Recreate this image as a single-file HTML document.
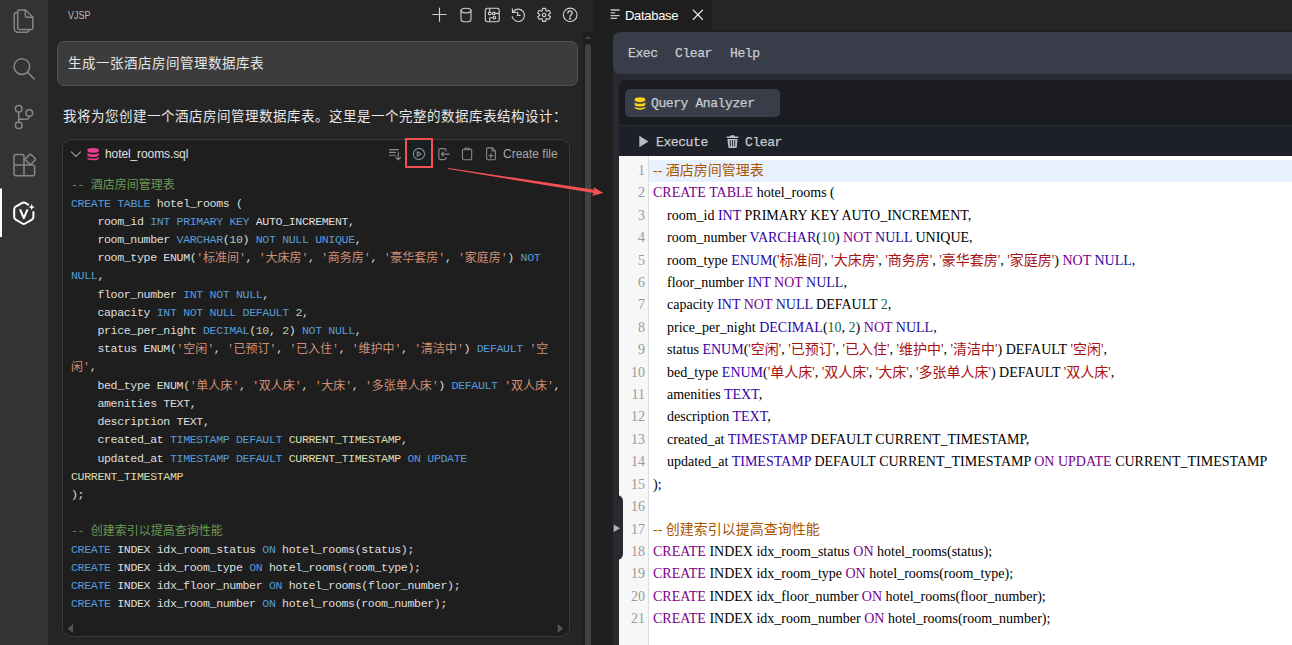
<!DOCTYPE html>
<html lang="zh">
<head>
<meta charset="utf-8">
<title>VJSP Database</title>
<style>
*{box-sizing:border-box;margin:0;padding:0}
html,body{width:1292px;height:645px;overflow:hidden;background:#1e1e1e}
body{position:relative;font-family:"Liberation Sans","Noto Sans CJK SC",sans-serif;color:#ccc}
.abs{position:absolute}
#act{left:0;top:0;width:48px;height:645px;background:#333333}
#side{left:48px;top:0;width:545px;height:645px;background:#252526}
#tabbar{left:712px;top:0;width:580px;height:31px;background:#252526}
#sbtrack{left:583px;top:32px;width:10px;height:613px;background:#1e1e1e}
#sbthumb{left:585px;top:44px;width:6px;height:601px;background:#424242;border-radius:3px 3px 0 0}
.ic{position:absolute;fill:none;stroke:#858585;stroke-width:1.6}
#title{left:68px;top:8px;font-size:11px;line-height:14px;color:#bbbbbb}
#umsg{left:57px;top:41px;width:521px;height:45px;background:#3c3c3c;border:1px solid #525252;border-radius:7px;font-size:13.5px;letter-spacing:0.5px;line-height:19px;color:#e6e6e6;padding:12px 0 0 10px;white-space:nowrap}
#amsg{left:63px;top:107px;font-size:13.5px;letter-spacing:0.5px;line-height:20px;color:#e6e6e6;white-space:nowrap}
#cb{left:62px;top:139px;width:508px;height:498px;background:#1e1e1e;border:1px solid #3a3a3a;border-radius:9px}
#fname{left:105px;top:146px;font-size:12px;letter-spacing:-0.1px;line-height:16px;color:#e0e0e0;white-space:nowrap}
#cfile{left:503px;top:146px;font-size:12px;line-height:16px;color:#a8a8a8;white-space:nowrap}
#code{left:71px;top:176.3px;font-family:"Liberation Mono","Noto Sans CJK SC",monospace;font-size:11.6px;letter-spacing:-0.361px;line-height:18.22px;color:#dedede;white-space:pre}
#code .z{font-size:12px;letter-spacing:0;position:relative;top:1px}
#code .k{color:#569cd6}#code .s{color:#ce9178}#code .n{color:#b5cea8}#code .c{color:#6a9955}#code .f{color:#dcdcaa}
#redbox{left:405px;top:138px;width:28px;height:30px;border:2px solid #f25054;background:#181f20}
/* right */
#tab{left:593px;top:0;width:119px;height:31px;background:#1e1e1e}
#tabname{left:625px;top:8px;font-size:13px;letter-spacing:-0.3px;line-height:16px;color:#ffffff}
#menubar{left:613px;top:32px;width:700px;height:42px;background:#393d4a;border-radius:7px 0 0 7px}
.mono{-webkit-text-stroke:0.25px #c9cbd1;font-family:"Liberation Mono",monospace;font-size:13px;letter-spacing:-0.4px;line-height:16px;color:#c9cbd1;white-space:pre}
#band{left:613px;top:60px;width:700px;height:585px;background:#292a30}
#panel{left:619px;top:80px;width:700px;height:565px;background:#1b1c21;border-radius:7px 0 0 0}
#qtab{left:625px;top:89px;width:155px;height:28px;background:#393d4a;border-radius:5px}
#sep{left:619px;top:125px;width:700px;height:31px;background:#1e2028;border-top:1px solid #2b2d34}
#ed{left:619px;top:156px;width:673px;height:489px;background:#fff}
#gut{left:619px;top:156px;width:30px;height:489px;background:#f7f7f7;border-right:1px solid #ddd}
#actl{left:649px;top:160px;width:643px;height:22px;background:#e8f2ff}
#ln{left:619px;top:160px;width:26px;text-align:right;font-family:"Liberation Serif",serif;font-size:14px;line-height:22.4px;color:#999;white-space:pre}
#sql{left:653px;top:160px;font-family:"Liberation Serif","Noto Sans CJK SC",serif;font-size:14px;line-height:22.4px;color:#000;white-space:pre}
#sql .k{color:#708}#sql .b{color:#30a}#sql .a{color:#219}#sql .n{color:#164}#sql .s{color:#a11}#sql .c{color:#a50}
#handle{left:613px;top:495px;width:10px;height:65px;background:#292a30;border-radius:0 6px 6px 0}
</style>
</head>
<body>
<div id="act" class="abs"></div>
<div id="side" class="abs"></div>
<div id="sbtrack" class="abs"></div>
<div id="sbthumb" class="abs"></div>
<div id="title" class="abs"><span style="display:inline-block;transform-origin:0 50%;transform:scaleX(.82)">VJSP</span></div>
<div id="umsg" class="abs">生成一张酒店房间管理数据库表</div>
<div id="amsg" class="abs">我将为您创建一个酒店房间管理数据库表。这里是一个完整的数据库表结构设计：</div>
<div id="cb" class="abs"></div>
<div id="fname" class="abs">hotel_rooms.sql</div>
<div id="cfile" class="abs">Create file</div>
<div id="code" class="abs"><span class="c">-- <span class="z">酒店房间管理表</span></span>
<span class="k">CREATE</span> <span class="k">TABLE</span> hotel_rooms (
    room_id <span class="k">INT</span> <span class="k">PRIMARY</span> <span class="k">KEY</span> AUTO_INCREMENT,
    room_number <span class="k">VARCHAR</span>(<span class="n">10</span>) <span class="k">NOT</span> <span class="k">NULL</span> <span class="k">UNIQUE</span>,
    room_type ENUM(<span class="s">'<span class="z">标准间</span>'</span>, <span class="s">'<span class="z">大床房</span>'</span>, <span class="s">'<span class="z">商务房</span>'</span>, <span class="s">'<span class="z">豪华套房</span>'</span>, <span class="s">'<span class="z">家庭房</span>'</span>) <span class="k">NOT</span>
<span class="k">NULL</span>,
    floor_number <span class="k">INT</span> <span class="k">NOT</span> <span class="k">NULL</span>,
    capacity <span class="k">INT</span> <span class="k">NOT</span> <span class="k">NULL</span> <span class="k">DEFAULT</span> <span class="n">2</span>,
    price_per_night <span class="k">DECIMAL</span>(<span class="n">10</span>, <span class="n">2</span>) <span class="k">NOT</span> <span class="k">NULL</span>,
    status ENUM(<span class="s">'<span class="z">空闲</span>'</span>, <span class="s">'<span class="z">已预订</span>'</span>, <span class="s">'<span class="z">已入住</span>'</span>, <span class="s">'<span class="z">维护中</span>'</span>, <span class="s">'<span class="z">清洁中</span>'</span>) <span class="k">DEFAULT</span> <span class="s">'<span class="z">空</span></span>
<span class="s"><span class="z">闲</span>'</span>,
    bed_type ENUM(<span class="s">'<span class="z">单人床</span>'</span>, <span class="s">'<span class="z">双人床</span>'</span>, <span class="s">'<span class="z">大床</span>'</span>, <span class="s">'<span class="z">多张单人床</span>'</span>) <span class="k">DEFAULT</span> <span class="s">'<span class="z">双人床</span>'</span>,
    amenities TEXT,
    description TEXT,
    created_at <span class="k">TIMESTAMP</span> <span class="k">DEFAULT</span> <span class="f">CURRENT_TIMESTAMP</span>,
    updated_at <span class="k">TIMESTAMP</span> <span class="k">DEFAULT</span> <span class="f">CURRENT_TIMESTAMP</span> <span class="k">ON</span> <span class="k">UPDATE</span>
<span class="f">CURRENT_TIMESTAMP</span>
);

<span class="c">-- <span class="z">创建索引以提高查询性能</span></span>
<span class="k">CREATE</span> INDEX idx_room_status <span class="k">ON</span> hotel_rooms(status);
<span class="k">CREATE</span> INDEX idx_room_type <span class="k">ON</span> hotel_rooms(room_type);
<span class="k">CREATE</span> INDEX idx_floor_number <span class="k">ON</span> hotel_rooms(floor_number);
<span class="k">CREATE</span> INDEX idx_room_number <span class="k">ON</span> hotel_rooms(room_number);</div>
<div id="redbox" class="abs"></div>

<div id="tab" class="abs"></div>
<div id="tabbar" class="abs"></div>
<div id="tabname" class="abs">Database</div>
<div id="band" class="abs"></div>
<div id="menubar" class="abs"></div>
<div class="abs mono" style="left:628px;top:46px">Exec</div>
<div class="abs mono" style="left:675px;top:46px">Clear</div>
<div class="abs mono" style="left:730px;top:46px">Help</div>
<div id="panel" class="abs"></div>
<div id="qtab" class="abs"></div>
<div class="abs mono" style="left:651px;top:96px">Query Analyzer</div>
<div id="sep" class="abs"></div>
<div class="abs mono" style="left:656px;top:135px">Execute</div>
<div class="abs mono" style="left:745px;top:135px">Clear</div>
<div id="ed" class="abs"></div>
<div id="gut" class="abs"></div>
<div id="actl" class="abs"></div>
<div id="ln" class="abs">1
2
3
4
5
6
7
8
9
10
11
12
13
14
15
16
17
18
19
20
21</div>
<div id="sql" class="abs"><span class="c">-- 酒店房间管理表</span>
<span class="k">CREATE</span> <span class="k">TABLE</span> hotel_rooms (
    room_id <span class="b">INT</span> PRIMARY KEY AUTO_INCREMENT,
    room_number <span class="b">VARCHAR</span>(<span class="n">10</span>) <span class="k">NOT</span> <span class="a">NULL</span> UNIQUE,
    room_type <span class="b">ENUM</span>(<span class="s">'标准间'</span>, <span class="s">'大床房'</span>, <span class="s">'商务房'</span>, <span class="s">'豪华套房'</span>, <span class="s">'家庭房'</span>) <span class="k">NOT</span> <span class="a">NULL</span>,
    floor_number <span class="b">INT</span> <span class="k">NOT</span> <span class="a">NULL</span>,
    capacity <span class="b">INT</span> <span class="k">NOT</span> <span class="a">NULL</span> DEFAULT <span class="n">2</span>,
    price_per_night <span class="b">DECIMAL</span>(<span class="n">10</span>, <span class="n">2</span>) <span class="k">NOT</span> <span class="a">NULL</span>,
    status <span class="b">ENUM</span>(<span class="s">'空闲'</span>, <span class="s">'已预订'</span>, <span class="s">'已入住'</span>, <span class="s">'维护中'</span>, <span class="s">'清洁中'</span>) DEFAULT <span class="s">'空闲'</span>,
    bed_type <span class="b">ENUM</span>(<span class="s">'单人床'</span>, <span class="s">'双人床'</span>, <span class="s">'大床'</span>, <span class="s">'多张单人床'</span>) DEFAULT <span class="s">'双人床'</span>,
    amenities <span class="b">TEXT</span>,
    description <span class="b">TEXT</span>,
    created_at <span class="b">TIMESTAMP</span> DEFAULT CURRENT_TIMESTAMP,
    updated_at <span class="b">TIMESTAMP</span> DEFAULT CURRENT_TIMESTAMP <span class="k">ON</span> <span class="k">UPDATE</span> CURRENT_TIMESTAMP
);

<span class="c">-- 创建索引以提高查询性能</span>
<span class="k">CREATE</span> INDEX idx_room_status <span class="k">ON</span> hotel_rooms(status);
<span class="k">CREATE</span> INDEX idx_room_type <span class="k">ON</span> hotel_rooms(room_type);
<span class="k">CREATE</span> INDEX idx_floor_number <span class="k">ON</span> hotel_rooms(floor_number);
<span class="k">CREATE</span> INDEX idx_room_number <span class="k">ON</span> hotel_rooms(room_number);</div>
<div id="handle" class="abs"></div>
<svg class="abs" style="left:0;top:0" width="1292" height="645" viewBox="0 0 1292 645" fill="none" stroke-linecap="round" stroke-linejoin="round">
<!-- activity bar -->
<g stroke="#868686" stroke-width="1.5">
<path d="M19.3 10h6.2l7.3 7.3v10.7a1.6 1.6 0 0 1-1.6 1.6h-11.9a1.6 1.6 0 0 1-1.6-1.6v-16.4a1.6 1.6 0 0 1 1.6-1.6z"/>
<path d="M25.3 10.2v5.4a1.6 1.6 0 0 0 1.6 1.6h5.6"/>
<path d="M16.6 12.6a2.6 2.6 0 0 0-2.4 2.6v13.3a3.8 3.8 0 0 0 3.8 3.8h8.4a2.6 2.6 0 0 0 2.5-2.2"/>
<circle cx="21.9" cy="66.6" r="7.8"/><path d="M27.6 72.4l6.6 6.6"/>
<circle cx="18.7" cy="108.7" r="3.3"/><circle cx="18.7" cy="125.3" r="3.3"/><circle cx="29.3" cy="113" r="3.3"/>
<path d="M18.7 112v10M29.3 116.3a3 3 0 0 1-3 3h-7.6"/>
<path d="M24 165v-8.6a2 2 0 0 0-2-2h-6a2 2 0 0 0-2 2v17.4a2 2 0 0 0 2 2h16.6a2 2 0 0 0 2-2v-6.8a2 2 0 0 0-2-2h-18.6M24 165v10.8"/>
<rect x="-3.9" y="-3.9" width="7.8" height="7.8" rx="1.3" transform="translate(30.4 159.3) rotate(45)"/>
</g>
<rect x="0" y="188.5" width="2" height="48.5" fill="#ffffff"/>
<g stroke="#ffffff" stroke-width="2">
<path d="M28.2 204.6l-2.9-1.7a3 3 0 0 0-3 0l-6.6 3.8a3 3 0 0 0-1.5 2.6v7.8a3 3 0 0 0 1.5 2.6l6.6 3.8a3 3 0 0 0 3 0l6.6-3.8a3 3 0 0 0 1.5-2.6v-5.2"/>
<path d="M20.4 210.2l3.4 8 3.4-8" stroke-width="2.1"/>
</g>
<path d="M31.7 203.4c.3 2.4 1 3.2 3.5 3.6c-2.500 .4-3.200 1.200-3.500 3.600c-.3-2.400-1-3.200-3.500-3.600c2.500-.4 3.200-1.200 3.500-3.600z" fill="#ffffff"/>
<!-- sidebar toolbar -->
<g stroke="#d0d0d0" stroke-width="1.1">
<path d="M432.800 14.500h13.400M439.500 8v13.200"/>
<ellipse cx="466" cy="10.600" rx="5" ry="2.300"/><path d="M461 10.600v8.800c0 1.300 2.200 2.300 5 2.300s5-1 5-2.300v-8.800"/>
<rect x="485.300" y="8.300" width="13.900" height="13.400" rx="2.200"/>
<path d="M489.700 8.500v3.500M495 13.400h4M489.700 21.500v-3.800h3.300"/>
<circle cx="489.700" cy="13.400" r="1.300"/><circle cx="493.700" cy="13.400" r="1.300"/><circle cx="494.400" cy="17.600" r="1.300"/>
<path d="M513.600 11.200a6.200 6.200 0 1 1-1.400 5.400M512.400 8.800v3.600h3.600M517.600 12v3.400h2.600"/>
<circle cx="570.2" cy="14.9" r="6.8"/>
<path d="M567.900 13a2.100 2.100 0 1 1 3.300 1.700c-.8 .6-1.200 1-1.200 2" stroke-width="1.4"/><circle cx="570" cy="18.700" r=".5" fill="#d0d0d0"/>
<circle cx="544.1" cy="14.9" r="1.7"/>
<path d="M542.22 11.04L542.48 8.40L545.72 8.40L545.98 11.04L546.50 11.34L548.92 10.25L550.54 13.05L548.39 14.60L548.39 15.20L550.54 16.75L548.92 19.55L546.50 18.46L545.98 18.76L545.72 21.40L542.48 21.40L542.22 18.76L541.70 18.46L539.28 19.55L537.66 16.75L539.81 15.20L539.81 14.60L537.66 13.05L539.28 10.25L541.70 11.34z"/>
</g>
<!-- code block header -->
<path d="M71.300 151.800l4.600 4.600 4.600-4.600" stroke="#a0a0a0" stroke-width="1.100"/>
<g fill="#e83e8c" stroke="none">
<path d="M87.400 149.900c0-1 2.500-1.800 5.700-1.800s5.700 .8 5.700 1.800v1.100c0 1-2.500 1.800-5.700 1.800s-5.700-.8-5.700-1.800z"/>
<path d="M87.400 152.800c1 1 3.200 1.500 5.700 1.500s4.700-.5 5.700-1.500v2.400c0 1-2.500 1.800-5.700 1.800s-5.700-.8-5.700-1.800z"/>
<path d="M87.400 156.900c1 1 3.200 1.500 5.700 1.500s4.700-.5 5.700-1.500v1.500c0 1-2.500 1.800-5.700 1.800s-5.700-.8-5.700-1.800z"/>
</g>
<g stroke="#8a8a8a" stroke-width="1.100">
<path d="M389.500 149.600h9M389.500 152.400h6M389.500 155.200h6M398.200 152.400v7M395.800 157.300l2.400 2.500 2.400-2.500"/>
<circle cx="419" cy="154" r="5.600"/><path d="M417.300 151.700v4.600l3.800-2.300z"/>
<path d="M446 151v-.6a1.800 1.800 0 0 0-1.800-1.800h-3.600a1.800 1.800 0 0 0-1.800 1.800v7.400a1.800 1.800 0 0 0 1.800 1.800h3.600a1.800 1.800 0 0 0 1.800-1.800v-.6M449.200 154.100h-7.800M443.300 152.200l-1.900 1.900 1.900 1.900"/>
<path d="M465 149h-1a1.500 1.500 0 0 0-1.500 1.500v7.800a1.500 1.500 0 0 0 1.500 1.500h6.200a1.500 1.500 0 0 0 1.500-1.500v-7.800a1.500 1.500 0 0 0-1.500-1.500h-1M465 148.200h4.200v1.500h-4.200z"/>
<path d="M487.800 147.900h4.600l3 3v7.700a1.200 1.200 0 0 1-1.200 1.200h-6.400a1.200 1.200 0 0 1-1.200-1.200v-9.500a1.200 1.200 0 0 1 1.200-1.200zM492.200 148v3h3M491 153.700v4M489 155.700h4"/>
</g>
<path d="M585 39l3-3.2 3 3.2z" fill="#454545"/>
<path d="M73 624v9l-5.200-4.500z" fill="#555555"/><path d="M557.800 624v9l5.200-4.500z" fill="#555555"/>
<!-- annotation arrow -->
<path d="M448.39 167.91L594.15 189.82L593.3 186.9L603.3 192.9L591.9 195.9L593.65 192.98L448.21 169.09z" fill="#f25054" stroke="none"/>
<!-- tab -->
<path d="M610.600 10h9M610.600 12.800h4.600M610.600 15.600h9M610.600 18.300h6.500" stroke="#c5c5c5" stroke-width="1.300" stroke-linecap="butt"/>
<path d="M693.300 10.200l9.200 9.200M702.500 10.200l-9.200 9.200" stroke="#ffffff" stroke-width="1.200"/>
<!-- query tab db icon -->
<g fill="#fcd116" stroke="none" transform="translate(0 .5)">
<path d="M634.700 98.600c0-1 2.400-1.900 5.300-1.900s5.300 .9 5.300 1.900v1.200c0 1-2.400 1.900-5.300 1.900s-5.300-.9-5.300-1.900z"/>
<path d="M634.700 101.700c1 1 3 1.600 5.300 1.600s4.300-.6 5.300-1.600v2.500c0 1-2.400 1.900-5.300 1.900s-5.300-.9-5.300-1.900z"/>
<path d="M634.700 106c1 1 3 1.600 5.300 1.600s4.300-.6 5.300-1.600v1.300c0 1-2.400 1.900-5.300 1.900s-5.300-.9-5.300-1.900z"/>
</g>
<path d="M639.300 135.800v11.400l9.200-5.700z" fill="#b9bcc8"/>
<g fill="#b9bcc8" stroke="none">
<path d="M726.700 136.600h3.300l.8-1.300h3.400l.8 1.300h3.300v1.500h-11.600z"/>
<path d="M727.500 139h10l-.7 7.700a1.300 1.300 0 0 1-1.300 1.200h-6a1.300 1.300 0 0 1-1.300-1.200z"/>
</g>
<path d="M730.300 140.500v5.500M732.500 140.500v5.500M734.700 140.500v5.500" stroke="#1e2028" stroke-width=".9"/>
<path d="M613.700 524.400v7.600l6.300-3.800z" fill="#b4b4bc"/>
</svg>
</body>
</html>
